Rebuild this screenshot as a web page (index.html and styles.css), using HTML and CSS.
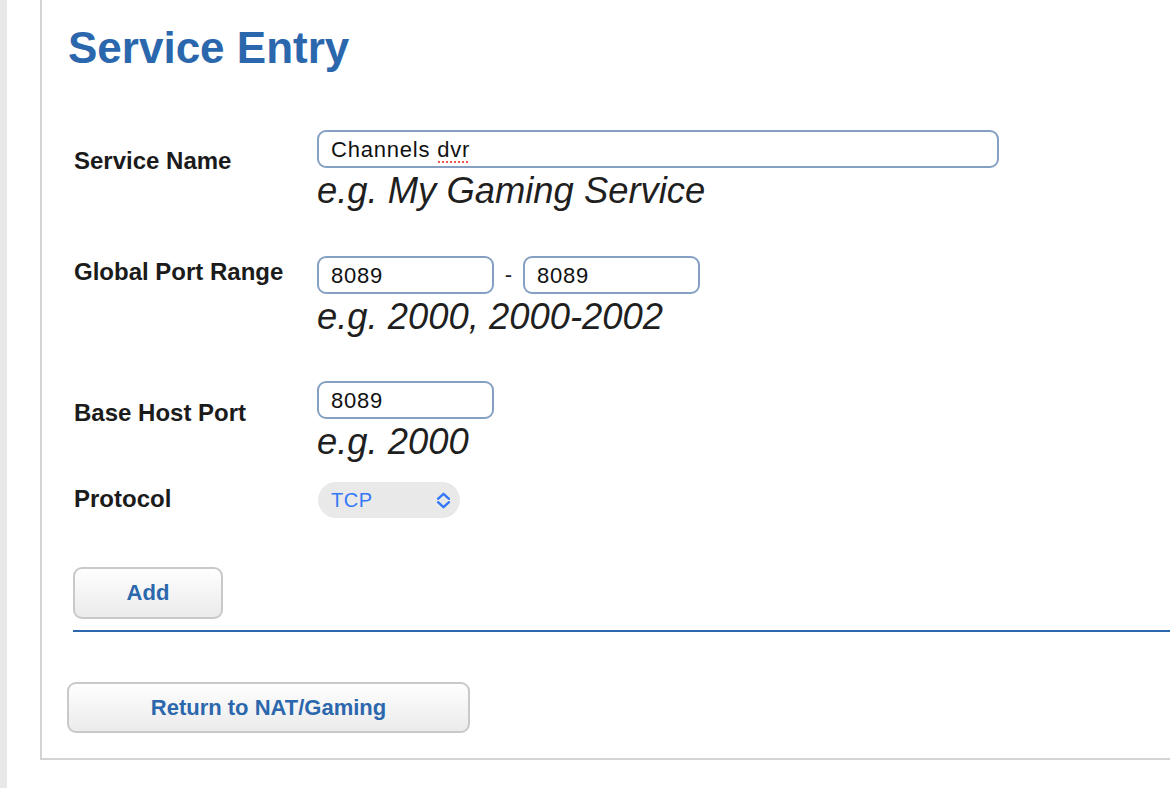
FILE: index.html
```html
<!DOCTYPE html>
<html lang="en">
<head>
<meta charset="utf-8">
<title>Service Entry</title>
<link rel="stylesheet" href="styles.css">
</head>
<body>
<div class="page">
  <div class="strip"></div>
  <div class="panel">
    <h1 class="title">Service Entry</h1>
    <form class="form">
      <div class="row row-name">
        <label class="label label-name">Service Name</label>
        <div class="field">
          <div class="input-wrap">
            <input class="input input-wide" type="text" value="Channels dvr">
            <span class="spell"></span>
          </div>
          <div class="hint">e.g. My Gaming Service</div>
        </div>
      </div>
      <div class="row row-global">
        <label class="label label-global">Global Port Range</label>
        <div class="field">
          <div class="range">
            <input class="input input-port" type="text" value="8089">
            <span class="dash">-</span>
            <input class="input input-port" type="text" value="8089">
          </div>
          <div class="hint">e.g. 2000, 2000-2002</div>
        </div>
      </div>
      <div class="row row-base">
        <label class="label label-base">Base Host Port</label>
        <div class="field">
          <input class="input input-port" type="text" value="8089">
          <div class="hint">e.g. 2000</div>
        </div>
      </div>
      <div class="row row-proto">
        <label class="label label-proto">Protocol</label>
        <div class="field">
          <div class="select">
            <span>TCP</span>
            <svg class="chev" width="15" height="17" viewBox="0 0 15 17">
              <polyline points="2,6.8 7.5,1.8 13,6.8" fill="none" stroke="#3478f6" stroke-width="2.4" stroke-linecap="round" stroke-linejoin="round"/>
              <polyline points="2,10.2 7.5,15.2 13,10.2" fill="none" stroke="#3478f6" stroke-width="2.4" stroke-linecap="round" stroke-linejoin="round"/>
            </svg>
          </div>
        </div>
      </div>
    </form>
    <button class="btn btn-add" type="button">Add</button>
    <div class="rule"></div>
    <button class="btn btn-return" type="button">Return to NAT/Gaming</button>
  </div>
</div>
</body>
</html>
```

FILE: styles.css
```css
html, body {
  margin: 0;
  padding: 0;
  background: #ffffff;
}

body {
  font-family: "Liberation Sans", Arial, sans-serif;
  overflow: hidden;
}

.page {
  display: flex;
  width: 1170px;
  height: 788px;
}

.strip {
  width: 7px;
  background: #e8e8e8;
  flex: none;
}

.panel {
  flex: 1;
  margin-left: 33px;
  height: 758px;
  border-left: 2px solid #d4d4d4;
  border-bottom: 2px solid #d4d4d4;
}

.title {
  margin: 22px 0 0 26px;
  font-size: 44px;
  line-height: 52px;
  font-weight: bold;
  color: #2b67ad;
}

.form {
  padding-left: 32px;
  margin: 56px 0 0 0;
}

.row {
  display: grid;
  grid-template-columns: 243px 1fr;
}

.row-global { margin-top: 45px; }
.row-base { margin-top: 44px; }
.row-proto { margin-top: 20px; }

.label {
  font-size: 24px;
  line-height: 28px;
  font-weight: bold;
  color: #1b1b1b;
}

.label-name { padding-top: 17px; }
.label-global { padding-top: 2px; }
.label-base { padding-top: 18px; }
.label-proto { padding-top: 3px; }

.field {
  display: flex;
  flex-direction: column;
  align-items: flex-start;
}

.input-wrap {
  position: relative;
}

.input {
  box-sizing: border-box;
  height: 38px;
  border: 2px solid #86a0c4;
  border-radius: 9px;
  padding: 2px 0 0 12px;
  margin: 0;
  font-family: "Liberation Sans", Arial, sans-serif;
  font-size: 22px;
  letter-spacing: 0.8px;
  color: #111;
  background: #fff;
  outline: none;
}

.input-wide { width: 682px; }
.input-port { width: 177px; }

.spell {
  position: absolute;
  left: 120px;
  top: 31px;
  width: 33px;
  height: 2px;
  background-image: radial-gradient(circle, #e8574e 0.9px, transparent 1.1px);
  background-size: 4px 2px;
}

.range {
  display: flex;
  align-items: center;
}

.dash {
  width: 29px;
  text-align: center;
  font-size: 22px;
  color: #222;
}

.hint {
  margin-top: 3px;
  font-size: 36.4px;
  line-height: 40px;
  font-style: italic;
  color: #1f1f1f;
}

.select {
  box-sizing: border-box;
  width: 142px;
  height: 36px;
  margin-left: 1px;
  border-radius: 18px;
  background: #e9e9e9;
  display: flex;
  align-items: center;
  justify-content: space-between;
  padding: 0 9px 0 13px;
  font-size: 20px;
  color: #3478f6;
  letter-spacing: 0.5px;
}

.chev {
  display: block;
}

.btn {
  display: block;
  box-sizing: border-box;
  border: 2px solid #c9c9c9;
  border-radius: 9px;
  background: linear-gradient(#fefefe, #ebebeb);
  font-family: "Liberation Sans", Arial, sans-serif;
  font-size: 22px;
  font-weight: bold;
  color: #2b67ad;
  padding: 0;
  cursor: pointer;
}

.btn-add {
  width: 150px;
  height: 52px;
  margin: 49px 0 0 31px;
}

.rule {
  height: 2px;
  background: #2b67ad;
  margin: 11px 0 0 31px;
}

.btn-return {
  width: 403px;
  height: 51px;
  margin: 50px 0 0 25px;
}
```
